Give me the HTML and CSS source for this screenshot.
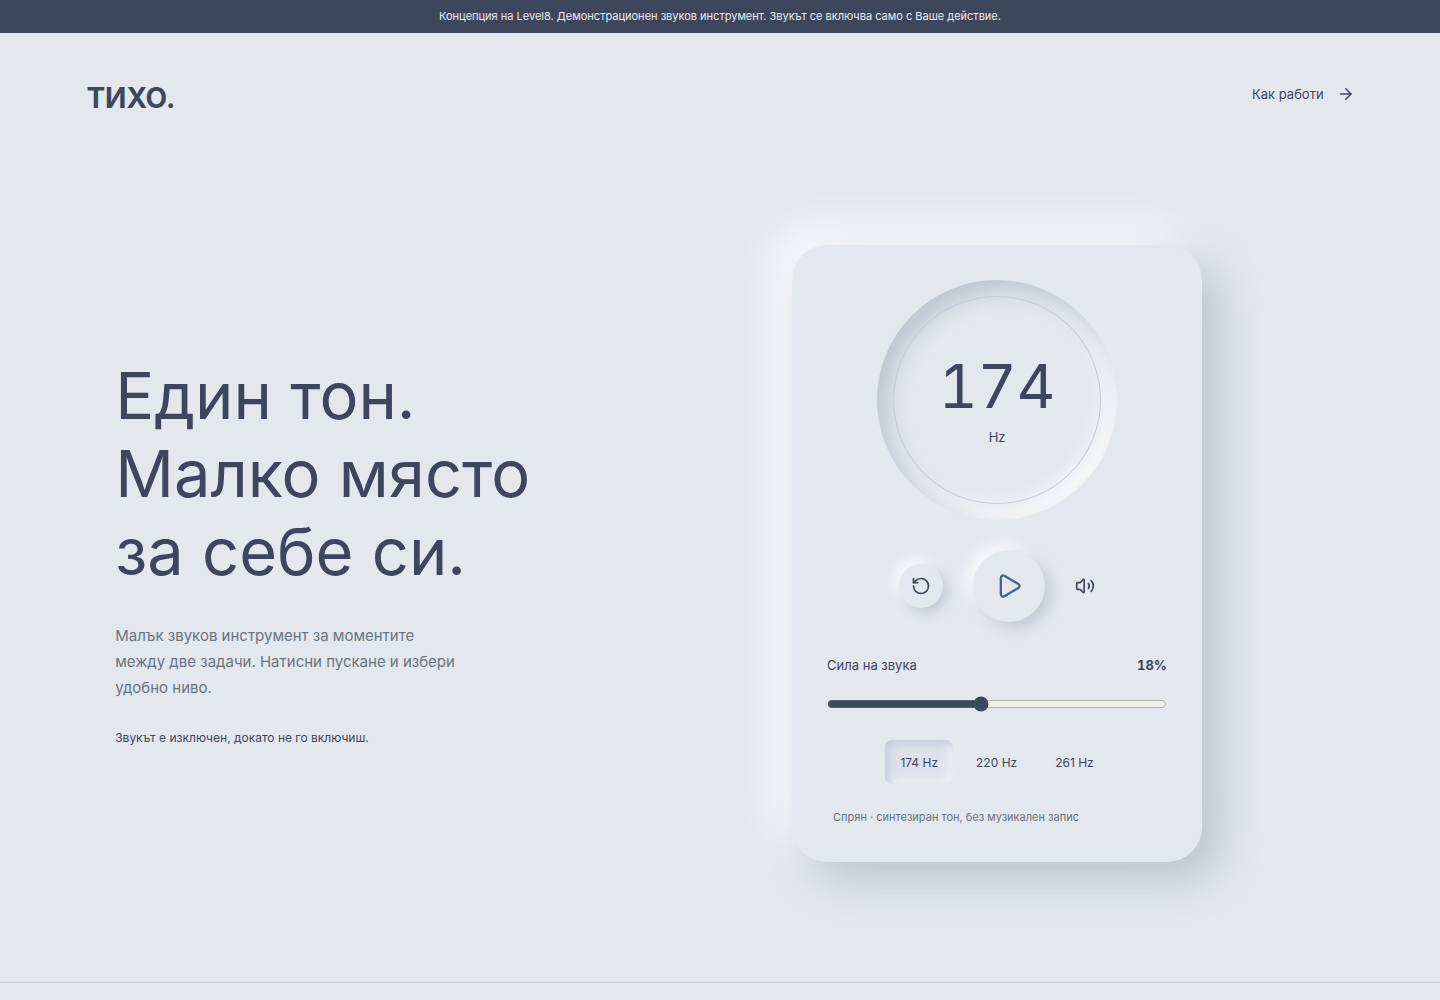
FILE: index.html
```
<!DOCTYPE html>
<html lang="bg">
<head>
    <meta charset="UTF-8">
    <meta name="viewport" content="width=device-width, initial-scale=1.0">
    <title>ТИХО.</title>
    <link rel="stylesheet" href="styles.css">
</head>
<body>
    <div class="notice">Концепция на Level8. Демонстрационен звуков инструмент. Звукът се включва само с Ваше действие.</div>

    <header class="site-header">
        <a class="logo" href="#">ТИХО.</a>
        <a class="how-link" href="#how">
            Как работи
            <svg class="icon" width="18" height="18" viewBox="0 0 24 24"><path d="M6 12h14"/><path d="m13 5 7 7-7 7"/></svg>
        </a>
    </header>

    <main>
        <section class="hero">
            <div class="hero-text">
                <h1>Един тон.<br>Малко място<br>за себе си.</h1>
                <p class="lead">Малък звуков инструмент за моментите между две задачи. Натисни пускане и избери удобно ниво.</p>
                <p class="hint">Звукът е изключен, докато не го включиш.</p>
            </div>

            <div class="player">
                <div class="dial">
                    <span class="dial-value" id="freq">174</span>
                    <span class="dial-unit">Hz</span>
                </div>

                <div class="controls">
                    <button class="btn-reset" type="button" aria-label="Нулирай">
                        <svg class="icon" width="20" height="20" viewBox="0 0 24 24"><path d="M3 12a9 9 0 1 0 9-9 9.75 9.75 0 0 0-6.74 2.74L3 8"/><path d="M3 3v5h5"/></svg>
                    </button>
                    <button class="btn-play" type="button" aria-label="Пусни">
                        <svg class="icon" width="28" height="28" viewBox="0 0 24 24"><path d="M5 5a2 2 0 0 1 3.008-1.728l11.997 6.998a2 2 0 0 1 .003 3.458l-12 7A2 2 0 0 1 5 19z"/></svg>
                    </button>
                    <svg class="icon" width="20" height="20" viewBox="0 0 24 24"><path d="M11 4.702a.705.705 0 0 0-1.203-.498L6.413 7.587A1.4 1.4 0 0 1 5.416 8H3a1 1 0 0 0-1 1v6a1 1 0 0 0 1 1h2.416a1.4 1.4 0 0 1 .997.413l3.383 3.384A.705.705 0 0 0 11 19.298z"/><path d="M16 9a5 5 0 0 1 0 6"/><path d="M19.364 18.364a9 9 0 0 0 0-12.728"/></svg>
                </div>

                <div class="volume">
                    <div class="volume-row">
                        <label for="volume">Сила на звука</label>
                        <output id="volume-value" for="volume">18%</output>
                    </div>
                    <input id="volume" type="range" min="0" max="40" value="18">
                </div>

                <div class="presets">
                    <button class="preset active" type="button" data-freq="174">174 Hz</button>
                    <button class="preset" type="button" data-freq="220">220 Hz</button>
                    <button class="preset" type="button" data-freq="261">261 Hz</button>
                </div>

                <p class="status">Спрян · синтезиран тон, без музикален запис</p>
            </div>
        </section>

        <section class="how" id="how"></section>
    </main>

    <script>
        const volume = document.getElementById('volume');
        const presets = document.querySelectorAll('.preset');

        volume.addEventListener('input', () => {
            document.getElementById('volume-value').textContent = volume.value + '%';
        });

        presets.forEach(preset => {
            preset.addEventListener('click', () => {
                presets.forEach(p => p.classList.remove('active'));
                preset.classList.add('active');
                document.getElementById('freq').textContent = preset.dataset.freq;
            });
        });
    </script>
</body>
</html>
```
FILE: styles.css
```
* {
    box-sizing: border-box;
}
body {
    margin: 0;
    background-color: #e3e7ee;
    color: #3d465c;
    font-family: Inter, "Liberation Sans", sans-serif;
    font-size: 13px;
}
a {
    color: inherit;
    text-decoration: none;
}
button {
    border: none;
    padding: 0;
    background: none;
    color: inherit;
    font-family: inherit;
    cursor: pointer;
}
.icon {
    display: block;
    fill: none;
    stroke: currentColor;
    stroke-width: 2;
    stroke-linecap: round;
    stroke-linejoin: round;
}
.notice {
    padding: 8px 16px;
    background-color: #3d475c;
    color: #e8ecf2;
    font-size: 11px;
    line-height: 17px;
    text-align: center;
}
.site-header {
    display: flex;
    justify-content: space-between;
    align-items: flex-start;
    padding: 44px 6% 6px;
}
.logo {
    color: #3d485c;
    font-size: 28px;
    font-weight: 700;
    line-height: 42px;
}
.how-link {
    display: flex;
    align-items: center;
    gap: 12px;
    line-height: 34px;
}
.hero {
    display: grid;
    grid-template-columns: 5fr 7fr;
    align-items: center;
    gap: 86px;
    padding: 120px 8%;
}
.hero-text {
    padding-bottom: 4px;
}
h1 {
    margin: 0 0 32px;
    font-size: 65px;
    font-weight: 400;
    line-height: 78px;
    white-space: nowrap;
}
.lead {
    max-width: 350px;
    margin: 0 0 28px;
    color: #68747f;
    font-size: 15px;
    line-height: 26px;
}
.hint {
    margin: 0;
    font-size: 12px;
    line-height: 18px;
}
.player {
    justify-self: center;
    width: 100%;
    max-width: 410px;
    padding: 35px;
    border-radius: 35px;
    background-color: #e3e7ee;
    box-shadow: 18px 18px 42px #bcc5d0, -18px -18px 42px #fafbfb;
}
.dial {
    position: relative;
    display: flex;
    flex-direction: column;
    align-items: center;
    width: 240px;
    height: 240px;
    margin: 0 auto 30px;
    padding-top: 68px;
    border-radius: 50%;
    box-shadow: inset 10px 10px 22px #bcc5d2, inset -10px -10px 22px #fafbfb;
}
.dial::after {
    content: "";
    position: absolute;
    inset: 16px;
    border: 1px solid #c3cad8;
    border-radius: 50%;
}
.dial-value {
    font-size: 60px;
    font-variant-numeric: tabular-nums;
    line-height: 76px;
}
.dial-unit {
    line-height: 26px;
}
.controls {
    display: flex;
    justify-content: center;
    align-items: center;
    gap: 30px;
    margin-bottom: 32px;
}
.btn-reset,
.btn-play {
    display: grid;
    place-items: center;
    border-radius: 50%;
    background-color: #e3e7ee;
}
.btn-reset {
    width: 44px;
    height: 44px;
    box-shadow: 5px 5px 12px #c3cad6, -5px -5px 12px #fafbfb;
}
.btn-play {
    width: 72px;
    height: 72px;
    color: #48619a;
    box-shadow: 6px 6px 14px #c3cad6, -6px -6px 14px #fafbfb;
}
.volume-row {
    display: flex;
    justify-content: space-between;
    line-height: 22px;
}
.volume-row output {
    font-weight: 700;
    font-variant-numeric: tabular-nums;
}
.volume input {
    display: block;
    width: 100%;
    height: 16px;
    margin: 20px 0 28px;
    accent-color: #3d485c;
}
.presets {
    display: flex;
    justify-content: center;
    gap: 8px;
    margin-bottom: 24px;
}
.preset {
    height: 44px;
    padding: 0 15px;
    border-radius: 7px;
    font-size: 12px;
}
.preset.active {
    background-color: #dde2ec;
    box-shadow: inset 4px 4px 8px #c6ccdb, inset -4px -4px 8px #f0f2f5;
}
.status {
    margin: 0;
    padding: 0 6px;
    color: #68747f;
    font-size: 11px;
    line-height: 19px;
}
.how {
    padding: 8px 8%;
    border-top: 1px solid #c9ced8;
}
```
